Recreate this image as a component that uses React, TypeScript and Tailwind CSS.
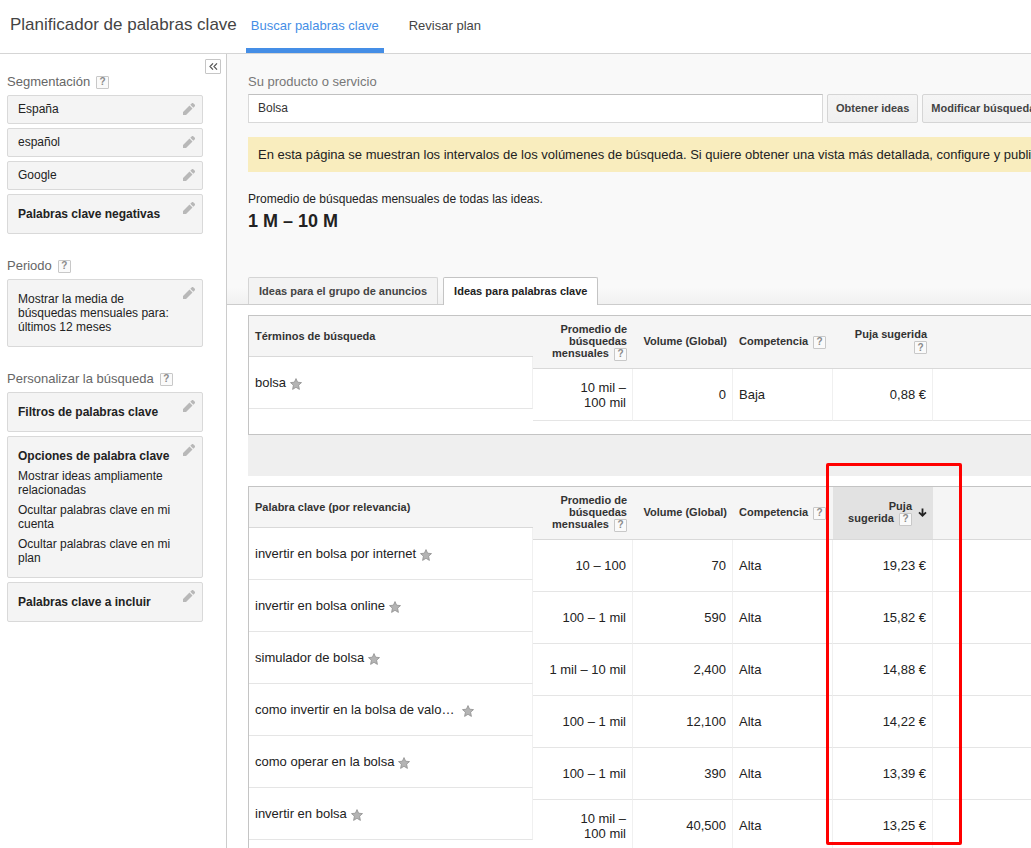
import React from "react";
import clsx from "clsx";

type Keyword = {
  term: string;
  average: string;
  volume: string;
  competition: string;
  bid: string;
};

const searchTerms: Keyword[] = [
  { term: "bolsa", average: "10 mil – 100\u00a0mil", volume: "0", competition: "Baja", bid: "0,88 €" },
];

const keywords: Keyword[] = [
  { term: "invertir en bolsa por internet", average: "10 – 100", volume: "70", competition: "Alta", bid: "19,23 €" },
  { term: "invertir en bolsa online", average: "100 – 1 mil", volume: "590", competition: "Alta", bid: "15,82 €" },
  { term: "simulador de bolsa", average: "1 mil – 10 mil", volume: "2,400", competition: "Alta", bid: "14,88 €" },
  { term: "como invertir en la bolsa de valo…\u00a0", average: "100 – 1 mil", volume: "12,100", competition: "Alta", bid: "14,22 €" },
  { term: "como operar en la bolsa", average: "100 – 1 mil", volume: "390", competition: "Alta", bid: "13,39 €" },
  { term: "invertir en bolsa", average: "10 mil – 100\u00a0mil", volume: "40,500", competition: "Alta", bid: "13,25 €" },
];

function Help({ className }: { className?: string }) {
  return (
    <button
      type="button"
      className={clsx(
        "inline-flex h-[13px] w-[13px] shrink-0 items-center justify-center rounded-[1px] border border-[#c8c8c8] bg-[#fafafa] text-[10px] leading-none font-bold text-[#8a8a8a]",
        className
      )}
    >
      ?
    </button>
  );
}

function Star() {
  return (
    <svg viewBox="0 0 12 12" className="h-3 w-3 shrink-0">
      <path
        d="M6 .6 7.6 4.2 11.5 4.6 8.6 7.2 9.4 11.4 6 9.3 2.6 11.4 3.4 7.2 .5 4.6 4.4 4.2Z"
        fill="#b4b4b4"
        stroke="#8f8f8f"
        strokeWidth=".8"
        strokeLinejoin="round"
      />
    </svg>
  );
}

function SideLabel({ children }: { children: React.ReactNode }) {
  return (
    <h2 className="mb-[5px] flex items-center gap-[6px] text-[13px] leading-4 text-[#666]">
      {children}
      <Help />
    </h2>
  );
}

function SideBox({ title, small, children }: { title?: string; small?: boolean; children?: React.ReactNode }) {
  return (
    <div
      className={clsx(
        "relative flex flex-col gap-[6px] rounded-[2px] border border-[#d9d9d9] bg-[#f4f4f4] pr-6 pl-[10px] text-[12px] leading-[14px] text-[#222]",
        small ? "pt-[6px] pb-[7px]" : "py-3"
      )}
    >
      {title && <h3 className="font-bold">{title}</h3>}
      {children}
      <button type="button" className="absolute top-[7px] right-[7px]">
        <svg viewBox="0 0 12 12" className="h-3 w-3" fill="#b8b8b8">
          <path d="M0 9 6.500 2.500 9.500 5.500 3 12H0zM7.300 1.700 8.600 .4a1.300 1.300 0 0 1 1.900 0L11.600 1.500a1.300 1.300 0 0 1 0 1.900L10.300 4.700z" />
        </svg>
      </button>
    </div>
  );
}

function Sidebar() {
  return (
    <aside className="w-[227px] shrink-0 border-r border-[#ccc] bg-white pt-[5px] pr-[5px] pl-[7px]">
      <div className="flex justify-end">
        <button
          type="button"
          className="flex h-[15px] w-4 items-center justify-center rounded-[1px] border border-[#c6c6c6] bg-white"
        >
          <svg viewBox="0 0 9 7" className="h-[7px] w-[9px]" fill="none" stroke="#555" strokeWidth="1.2">
            <path d="M4 .4 1 3.500 4 6.600M8 .4 5 3.500 8 6.600" />
          </svg>
        </button>
      </div>
      <div className="flex flex-col gap-6 pr-[18px]">
        <section>
          <SideLabel>Segmentación</SideLabel>
          <div className="flex flex-col gap-1">
            <SideBox small>España</SideBox>
            <SideBox small>español</SideBox>
            <SideBox small>Google</SideBox>
            <SideBox title="Palabras clave negativas" />
          </div>
        </section>
        <section>
          <SideLabel>Periodo</SideLabel>
          <SideBox>Mostrar la media de búsquedas mensuales para: últimos 12 meses</SideBox>
        </section>
        <section>
          <SideLabel>Personalizar la búsqueda</SideLabel>
          <div className="flex flex-col gap-1">
            <SideBox title="Filtros de palabras clave" />
            <SideBox title="Opciones de palabra clave">
              <p>Mostrar ideas ampliamente relacionadas</p>
              <p>Ocultar palabras clave en mi cuenta</p>
              <p>Ocultar palabras clave en mi plan</p>
            </SideBox>
            <SideBox title="Palabras clave a incluir" />
          </div>
        </section>
      </div>
    </aside>
  );
}

function KeywordTable({ heading, rows, sorted }: { heading: string; rows: Keyword[]; sorted?: boolean }) {
  const th = "px-[6px] pb-[2px] text-right align-middle font-bold";
  const td = "border-b border-[#e5e5e5] border-r-[#f0f0f0]";

  return (
    <div className="flex items-start">
      <table className="w-[284px] shrink-0 table-fixed border-separate border-spacing-0 text-left text-[#222]">
        <thead>
          <tr className="h-[41px] bg-[#f5f5f5] text-[11px] text-[#333]">
            <th className="border-b border-[#d9d9d9] px-[6px] font-bold">{heading}</th>
          </tr>
        </thead>
        <tbody>
          {rows.map((row) => (
            <tr key={row.term} className="h-[52px] text-[13px] leading-4">
              <td className={clsx(td, "border-r pl-[6px]")}>
                <div className="flex items-center gap-1 whitespace-nowrap">
                  {row.term}
                  <button type="button" className="mt-[2px]">
                    <Star />
                  </button>
                </div>
              </td>
            </tr>
          ))}
        </tbody>
      </table>
      <table className="min-w-[498px] flex-1 table-fixed border-separate border-spacing-0 text-[#222]">
        <thead>
          <tr className="h-[53px] bg-[#f5f5f5] text-[11px] leading-3 text-[#333] [&>th]:border-b [&>th]:border-[#d9d9d9]">
            <th className={clsx(th, "w-[100px]")}>
              Promedio de búsquedas mensuales <Help className="-my-1 ml-[2px] align-middle" />
            </th>
            <th className={clsx(th, "w-[100px] whitespace-nowrap")}>Volume (Global)</th>
            <th className={clsx(th, "w-[100px]")}>
              <div className="flex items-center gap-[5px]">
                Competencia
                <Help className="mt-[2px]" />
              </div>
            </th>
            {sorted ? (
              <th className={clsx(th, "w-[100px] bg-[#e2e2e2]")}>
                <div className="flex items-center justify-end gap-[6px]">
                  <span>
                    Puja
                    <br />
                    sugerida <Help className="-my-1 ml-[2px] align-middle" />
                  </span>
                  <svg viewBox="0 0 9 9" className="h-[9px] w-[9px] shrink-0" fill="none" stroke="#222" strokeWidth="1.8">
                    <path d="M4.500 .5V7.500M1 4.300 4.500 7.700 8 4.300" />
                  </svg>
                </div>
              </th>
            ) : (
              <th className={clsx(th, "w-[100px]")}>
                <div className="flex flex-col items-end whitespace-nowrap">
                  Puja sugerida
                  <Help className="mt-px" />
                </div>
              </th>
            )}
            <th />
          </tr>
        </thead>
        <tbody>
          {rows.map((row) => (
            <tr key={row.term} className="h-[52px] text-right text-[13px] leading-[15px]">
              <td className={clsx(td, "border-r pr-[6px] pl-4")}>{row.average}</td>
              <td className={clsx(td, "border-r pr-[6px]")}>{row.volume}</td>
              <td className={clsx(td, "border-r pl-[6px] text-left")}>{row.competition}</td>
              <td className={clsx(td, "border-r pr-[6px]")}>{row.bid}</td>
              <td className={td} />
            </tr>
          ))}
        </tbody>
      </table>
    </div>
  );
}

const buttonClass =
  "h-[29px] shrink-0 rounded-[2px] border border-[#d5d5d5] bg-linear-to-b from-[#f5f5f5] to-[#f0f0f0] px-2 text-[11px] font-bold whitespace-nowrap text-[#444]";

export default function App() {
  return (
    <div className="flex h-screen flex-col overflow-hidden bg-white font-['Liberation_Sans',Arial,sans-serif]">
      <header className="flex h-[54px] shrink-0 items-stretch border-b border-[#d5d5d5] pl-[10px]">
        <h1 className="mt-[15px] mr-[9px] text-[17px] leading-5 whitespace-nowrap text-[#444]">
          Planificador de palabras clave
        </h1>
        <nav className="flex gap-5 text-[13px] leading-4 whitespace-nowrap">
          <a href="#buscar" className="border-b-[5px] border-[#458ee6] px-[5px] pt-[18px] text-[#458ee6]">
            Buscar palabras clave
          </a>
          <a href="#plan" className="px-[5px] pt-[18px] text-[#444]">
            Revisar plan
          </a>
        </nav>
      </header>

      <div className="flex min-h-0 flex-1">
        <Sidebar />
        <main className="min-w-0 flex-1 overflow-hidden">
          <section className="border-b border-[#ccc] bg-[linear-gradient(to_top,#f1f1f1,#f9f9f9_16px)] pt-5 pl-[21px]">
            <label htmlFor="product" className="block text-[13px] leading-4 text-[#777]">
              Su producto o servicio
            </label>
            <form className="mt-1 flex gap-1">
              <input
                id="product"
                type="text"
                defaultValue="Bolsa"
                className="h-[29px] w-[575px] shrink-0 border border-[#d9d9d9] border-t-[#c0c0c0] bg-white px-[9px] pb-[2px] text-[12px] text-[#333] outline-none"
              />
              <button type="button" className={buttonClass}>
                Obtener ideas
              </button>
              <button type="button" className={buttonClass}>
                Modificar búsqueda
              </button>
            </form>
            <p className="mt-[14px] bg-[#f9edbe] py-[9px] pl-[10px] text-[13px] leading-[17px] whitespace-nowrap text-[#222]">
              En esta página se muestran los intervalos de los volúmenes de búsqueda. Si quiere obtener una vista más
              detallada, configure y publi
            </p>
            <p className="mt-[19px] text-[12px] leading-4 text-[#222]">
              Promedio de búsquedas mensuales de todas las ideas.
            </p>
            <p className="mt-1 text-[18px] leading-5 font-bold text-[#222]">1 M – 10 M</p>
            <div role="tablist" className="mt-[46px] flex gap-[5px] text-[11px] font-bold whitespace-nowrap">
              <button
                type="button"
                role="tab"
                className="h-[27px] rounded-t-[2px] border border-b-0 border-[#d5d5d5] bg-[#f3f3f3] px-[10px] text-[#444]"
              >
                Ideas para el grupo de anuncios
              </button>
              <button
                type="button"
                role="tab"
                aria-selected="true"
                className="-mb-px h-7 rounded-t-[2px] border border-b-0 border-[#c4c4c4] bg-white px-[10px] text-[#222]"
              >
                Ideas para palabras clave
              </button>
            </div>
          </section>

          <section className="pt-[10px] pl-[21px]">
            <div className="border-y border-l border-[#c4c4c4] pb-[13px]">
              <KeywordTable heading="Términos de búsqueda" rows={searchTerms} />
            </div>
            <div className="mb-[10px] h-[41px] bg-[#efefef]" />
            <div className="relative border-t border-l border-[#c4c4c4]">
              <KeywordTable heading="Palabra clave (por relevancia)" rows={keywords} sorted />
              {/* highlight round the bid column */}
              <div className="pointer-events-none absolute -top-6 left-[577px] h-[382px] w-[136px] rounded-[2px] border-3 border-[#f00]" />
            </div>
          </section>
        </main>
      </div>
    </div>
  );
}
